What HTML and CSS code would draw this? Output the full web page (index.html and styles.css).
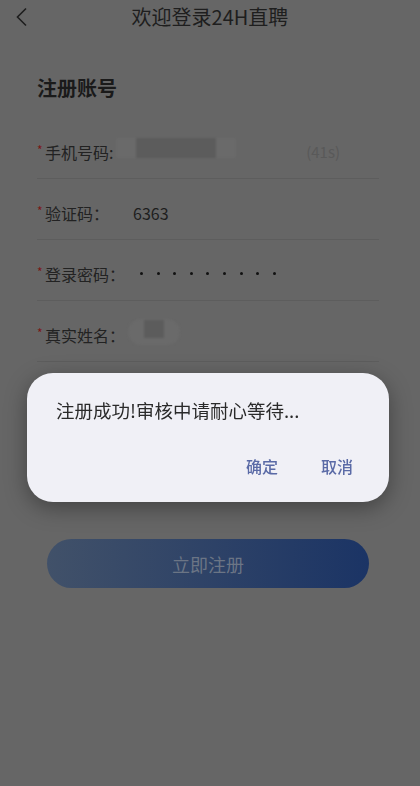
FILE: index.html
```html
<!DOCTYPE html>
<html>
<head>
    <title>注册账号</title>
    <meta charset="utf-8">
    <link rel="stylesheet" href="styles.css">
</head>
<body>

    <div class="page">
        <div class="header">
            <svg class="back" width="14" height="20" viewBox="0 0 14 20">
                <path d="M11 1.5 L2.5 10 L11 18.5" fill="none" stroke="#1e1e1e" stroke-width="1.6"/>
            </svg>
            <span class="title">欢迎登录24H直聘</span>
        </div>

        <h2 class="heading">注册账号</h2>

        <div class="form">
            <div class="row">
                <span class="star">*</span><span class="label">手机号码:</span>
                <span class="blur phone"><i></i></span>
                <span class="timer">(41s)</span>
            </div>
            <div class="row">
                <span class="star">*</span><span class="label">验证码：</span>
                <span class="value code">6363</span>
            </div>
            <div class="row">
                <span class="star">*</span><span class="label">登录密码：</span>
                <span class="dots"><i></i><i></i><i></i><i></i><i></i><i></i><i></i><i></i><i></i></span>
            </div>
            <div class="row">
                <span class="star">*</span><span class="label">真实姓名：</span>
                <span class="blur name"><i></i></span>
            </div>
        </div>

        <div class="submit-wrap">
            <button class="submit" type="button">立即注册</button>
        </div>
    </div>

    <div class="mask">
        <div class="dialog">
            <p class="message">注册成功!审核中请耐心等待...</p>
            <div class="actions">
                <span class="action">确定</span>
                <span class="action">取消</span>
            </div>
        </div>
    </div>

</body>
</html>
```

FILE: styles.css
```css
body {
    margin: 0;
    background-color: #666666;
    font-family: "Noto Sans CJK SC", "Noto Sans", sans-serif;
    color: #1e1e1e;
}

.page {
    width: 420px;
    height: 786px;
}

.header {
    height: 34px;
    display: flex;
    align-items: center;
    justify-content: center;
    position: relative;
}

.back {
    position: absolute;
    left: 15px;
    top: 7px;
}

.title {
    font-size: 20px;
    line-height: 34px;
    color: #1e1e1e;
}

.heading {
    margin: 40px 0 16px 37px;
    font-size: 20px;
    line-height: 28px;
    font-weight: bold;
    color: #1a1a1a;
}

.form {
    padding: 0 41px 0 37px;
}

.row {
    height: 61px;
    box-sizing: border-box;
    padding-top: 22px;
    border-bottom: 1px solid #5d5d5d;
    display: flex;
    align-items: flex-start;
    line-height: 24px;
    font-size: 16px;
}

.star {
    color: #7a1616;
    font-size: 12px;
    line-height: 20px;
    width: 8px;
}

.label {
    color: #222222;
}

.value {
    color: #1e1e1e;
}

.code {
    margin-left: 24px;
}

.timer {
    margin-left: auto;
    margin-right: 39px;
    font-size: 15px;
    color: #595959;
}

.blur {
    display: flex;
    justify-content: center;
    align-items: center;
    background-color: #6a6a6a;
    margin-top: -2px;
    filter: blur(1px);
}

.blur i {
    display: block;
    background-color: #5c5c5c;
}

.phone {
    width: 120px;
    height: 20px;
    margin-left: 3px;
}

.phone i {
    width: 80px;
    height: 20px;
}

.name {
    width: 52px;
    height: 26px;
    margin-left: 3px;
    margin-top: -4px;
    border-radius: 13px;
}

.name i {
    width: 20px;
    height: 18px;
    margin-top: -6px;
}

.dots {
    display: flex;
    gap: 13.6px;
    margin-left: 15px;
    padding-top: 10px;
}

.dots i {
    display: block;
    width: 3px;
    height: 3px;
    border-radius: 50%;
    background-color: #111111;
}

.submit-wrap {
    padding: 177px 51px 0 47px;
}

.submit {
    width: 100%;
    height: 49px;
    border: none;
    border-radius: 25px;
    background: linear-gradient(90deg, #415169, #1b3465);
    color: #6b7585;
    font-family: "Noto Sans CJK SC", sans-serif;
    font-size: 18px;
    cursor: pointer;
}

.mask {
    position: fixed;
    top: 0;
    left: 0;
    right: 0;
    bottom: 0;
}

.dialog {
    position: absolute;
    top: 373px;
    left: 27px;
    width: 362px;
    height: 129px;
    box-sizing: border-box;
    padding: 24px 36px 0 29px;
    background-color: #f0f0f6;
    border-radius: 26px;
    box-shadow: 0 6px 22px rgba(0, 0, 0, 0.35);
}

.message {
    margin: 0;
    font-size: 18.5px;
    line-height: 26px;
    color: #2a2a2a;
}

.actions {
    display: flex;
    justify-content: flex-end;
    gap: 43px;
    margin-top: 31px;
}

.action {
    font-size: 16px;
    line-height: 24px;
    font-weight: 500;
    color: #5a6aa6;
}
```
